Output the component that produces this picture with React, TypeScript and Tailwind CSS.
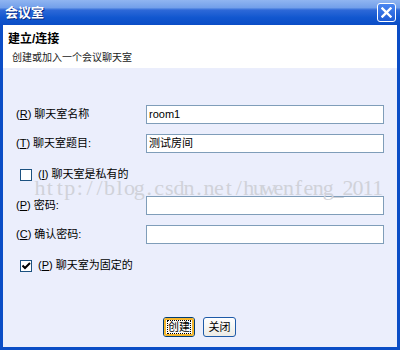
import React from 'react';

const FONT = "font-['Liberation_Sans','Noto_Sans_CJK_SC',sans-serif]";
const WATERMARK = 'http://blog.csdn.net/huwenfeng_2011';

const Key: React.FC<{ k: string }> = ({ k }) => (
  <span className="mr-[3px]">
    (<span className="underline underline-offset-1">{k}</span>)
  </span>
);

const Field: React.FC<{ k: string; label: string; value?: string; className?: string }> = ({ k, label, value, className }) => (
  <div className={`flex items-center h-[19px] ${className ?? ''}`}>
    <div className="w-[130px] text-[11px] text-black">
      <Key k={k} />
      {label}
    </div>
    <div className="w-[238px] h-[19px] bg-white border border-[#7f9db9] px-[2px] flex items-center text-[11px] text-black">
      {value}
    </div>
  </div>
);

const Check: React.FC<{ k: string; label: string; checked?: boolean; className?: string }> = ({ k, label, checked, className }) => (
  <div className={`flex items-center h-[13px] pl-[4px] ${className ?? ''}`}>
    <div className="w-[12px] h-[12px] border border-[#1c5180] bg-white flex items-center justify-center">
      {checked && (
        <svg width="9" height="8" viewBox="0 0 9 8">
          <path d="M0.5 3.5 L3 6 L8 1" fill="none" stroke="#000" strokeWidth="2" />
        </svg>
      )}
    </div>
    <div className="ml-[6px] text-[11px] text-black">
      <Key k={k} />
      {label}
    </div>
  </div>
);

export default function App() {
  return (
    <div className={`relative w-[400px] h-[350px] flex flex-col bg-[#0b4dc6] ${FONT}`}>
      {/* Title bar */}
      <div className="h-[25px] shrink-0 flex items-center justify-between pl-[5px] pr-[4px] bg-[linear-gradient(180deg,#90b5f1_0%,#73a0ea_30%,#2e69d8_40%,#1257cf_70%,#0b4dc6_100%)]">
        <span className="text-[13px] font-bold text-white [text-shadow:1px_1px_0_#0a2a80]">会议室</span>
        <div className="w-[19px] h-[19px] rounded-[3px] border border-white bg-[linear-gradient(180deg,#4a86f0,#1d5bd6)] flex items-center justify-center">
          <svg width="11" height="11" viewBox="0 0 11 11">
            <path d="M1.5 1.5 L9.5 9.5 M9.5 1.5 L1.5 9.5" stroke="#fff" strokeWidth="2.4" strokeLinecap="square" />
          </svg>
        </div>
      </div>

      <div className="flex-1 flex flex-col mx-[3px] mb-[3px] bg-[#ebeefc]">
        {/* Header */}
        <div className="h-[43px] shrink-0 bg-white pl-[5px] pt-[6px]">
          <div className="text-[12px] font-bold text-black leading-[16px]">建立/连接</div>
          <div className="text-[10px] text-[#222] leading-[14px] mt-[4px] pl-[4px]">创建或加入一个会议聊天室</div>
        </div>

        {/* Form */}
        <div className="flex-1 flex flex-col pl-[13px]">
          <Field k="R" label="聊天室名称" value="room1" className="mt-[37px]" />
          <Field k="T" label="聊天室题目:" value="测试房间" className="mt-[10px]" />
          <Check k="I" label="聊天室是私有的" className="mt-[15px]" />
          <Field k="P" label="密码:" className="mt-[15px]" />
          <Field k="C" label="确认密码:" className="mt-[10px]" />
          <Check k="P" label="聊天室为固定的" checked className="mt-[15px]" />

          <div className="flex gap-[8px] mt-[45px] pl-[147px]">
            <button className="w-[32px] h-[20px] rounded-[3px] border border-[#003c74] bg-[#fbfbf8] p-0">
              <div className="w-full h-full rounded-[2px] border-2 border-[#f5b62c] flex items-center justify-center">
                <div className="border border-dotted border-black leading-[12px] text-[11px] text-black whitespace-nowrap">创建</div>
              </div>
            </button>
            <button className="w-[33px] h-[20px] rounded-[3px] border border-[#1e5aa8] bg-[linear-gradient(180deg,#ffffff,#ecebe6)] text-[11px] text-black whitespace-nowrap flex items-center justify-center">
              关闭
            </button>
          </div>
        </div>
      </div>

      {/* Watermark */}
      <div className="absolute left-[35px] top-[176px] flex font-['Liberation_Serif',serif] text-[22px] leading-[24px] text-[#d0d2d9] pointer-events-none">
        {WATERMARK.split('').map((c, i) => (
          <span key={i} className="w-[9.95px] flex justify-center">
            {c}
          </span>
        ))}
      </div>
    </div>
  );
}
